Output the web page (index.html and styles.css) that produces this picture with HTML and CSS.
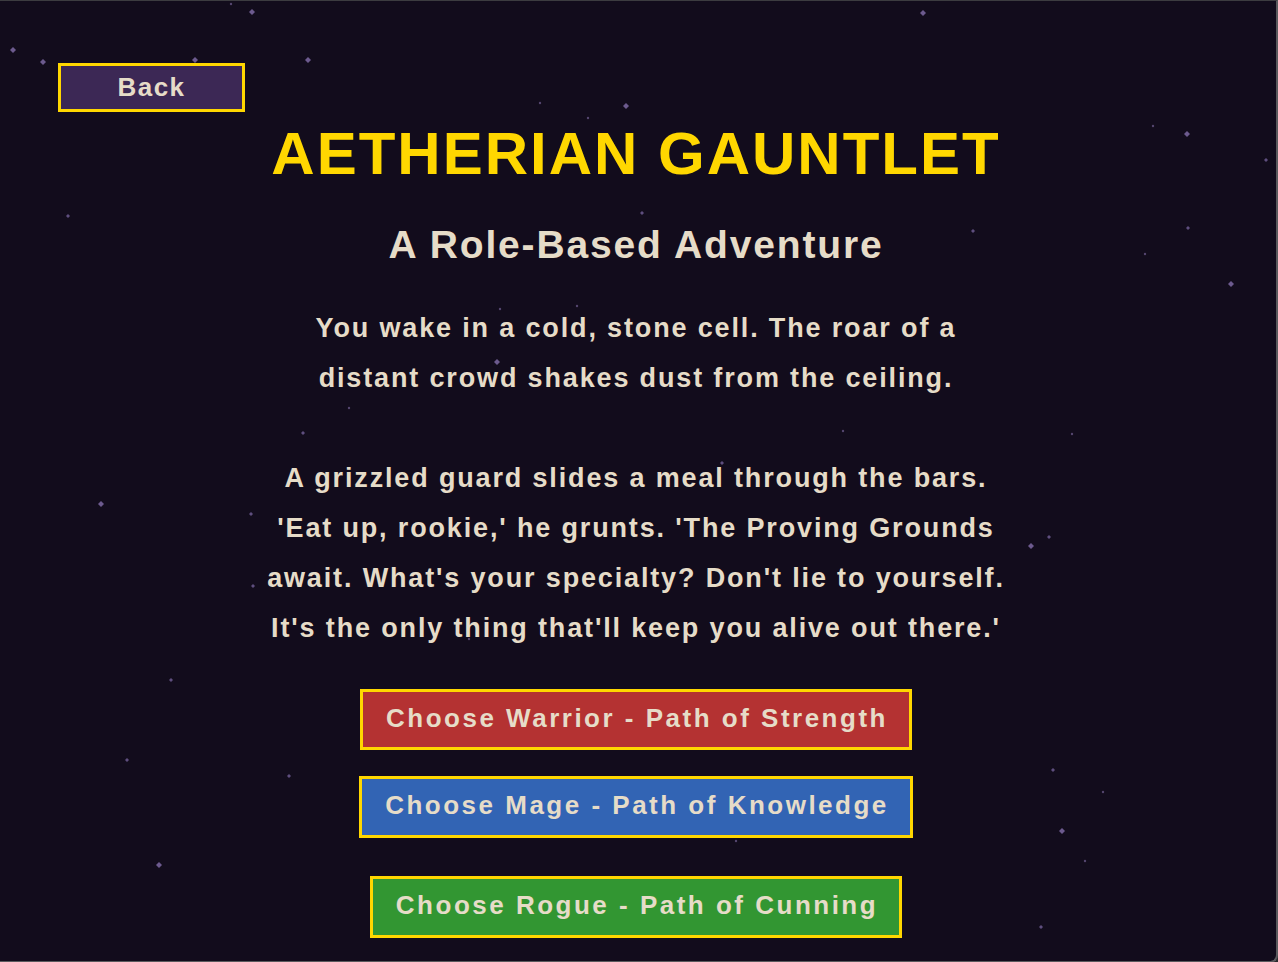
FILE: index.html
```html
<!DOCTYPE html>
<html lang="en">
<head>
<meta charset="utf-8">
<title>Aetherian Gauntlet</title>
<link rel="stylesheet" href="styles.css">
</head>
<body>
<div class="screen">
  <svg class="stars" width="1276" height="960" viewBox="0 0 1276 960" aria-hidden="true">
    <g class="star-big">
      <path d="M13 46l3 3-3 3-3-3z"/>
      <path d="M43 58l3 3-3 3-3-3z"/>
      <path d="M195 56l3 3-3 3-3-3z"/>
      <path d="M308 56l3 3-3 3-3-3z"/>
      <path d="M252 8l3 3-3 3-3-3z"/>
      <path d="M626 102l3 3-3 3-3-3z"/>
      <path d="M1187 130l3 3-3 3-3-3z"/>
      <path d="M1231 280l3 3-3 3-3-3z"/>
      <path d="M497 358l3 3-3 3-3-3z"/>
      <path d="M101 500l3 3-3 3-3-3z"/>
      <path d="M1031 542l3 3-3 3-3-3z"/>
      <path d="M1062 827l3 3-3 3-3-3z"/>
      <path d="M159 861l3 3-3 3-3-3z"/>
      <path d="M923 9l3 3-3 3-3-3z"/>
    </g>
    <g class="star-mid">
      <path d="M68 213l2 2-2 2-2-2z"/>
      <path d="M642 210l2 2-2 2-2-2z"/>
      <path d="M1266 157l2 2-2 2-2-2z"/>
      <path d="M1188 225l2 2-2 2-2-2z"/>
      <path d="M722 460l2 2-2 2-2-2z"/>
      <path d="M251 511l2 2-2 2-2-2z"/>
      <path d="M253 583l2 2-2 2-2-2z"/>
      <path d="M171 677l2 2-2 2-2-2z"/>
      <path d="M127 757l2 2-2 2-2-2z"/>
      <path d="M289 773l2 2-2 2-2-2z"/>
      <path d="M1053 767l2 2-2 2-2-2z"/>
      <path d="M1049 534l2 2-2 2-2-2z"/>
      <path d="M1041 924l2 2-2 2-2-2z"/>
      <path d="M303 430l2 2-2 2-2-2z"/>
      <path d="M973 228l2 2-2 2-2-2z"/>
    </g>
    <g class="star-small">
      <circle cx="231" cy="3" r="1.2"/>
      <circle cx="540" cy="102" r="1.2"/>
      <circle cx="588" cy="117" r="1.2"/>
      <circle cx="1153" cy="125" r="1.2"/>
      <circle cx="1145" cy="253" r="1.2"/>
      <circle cx="500" cy="308" r="1.2"/>
      <circle cx="577" cy="305" r="1.2"/>
      <circle cx="567" cy="382" r="1.2"/>
      <circle cx="349" cy="407" r="1.2"/>
      <circle cx="843" cy="430" r="1.2"/>
      <circle cx="1072" cy="433" r="1.2"/>
      <circle cx="534" cy="482" r="1.2"/>
      <circle cx="469" cy="638" r="1.2"/>
      <circle cx="736" cy="840" r="1.2"/>
      <circle cx="1103" cy="791" r="1.2"/>
      <circle cx="1085" cy="860" r="1.2"/>
    </g>
  </svg>

  <main class="content">
    <button class="back" type="button">Back</button>
    <h1 class="title">AETHERIAN GAUNTLET</h1>
    <h2 class="subtitle">A Role-Based Adventure</h2>
    <p class="story">You wake in a cold, stone cell. The roar of a<br>distant crowd shakes dust from the ceiling.<br><br>A grizzled guard slides a meal through the bars.<br>'Eat up, rookie,' he grunts. 'The Proving Grounds<br>await. What's your specialty? Don't lie to yourself.<br>It's the only thing that'll keep you alive out there.'</p>
    <div class="choices">
      <button class="choice warrior" type="button">Choose Warrior - Path of Strength</button>
      <button class="choice mage" type="button">Choose Mage - Path of Knowledge</button>
      <button class="choice rogue" type="button">Choose Rogue - Path of Cunning</button>
    </div>
  </main>
</div>
</body>
</html>
```

FILE: styles.css
```css
html, body {
  margin: 0;
  padding: 0;
  background: #2b2b2e;
}

.screen {
  position: relative;
  width: 1276px;
  height: 960px;
  background: #120c1c;
  border-top: 1px solid #3c3c40;
  border-right: 2px solid #5a5a5e;
  border-bottom: 2px solid #5a5a5e;
  border-bottom-right-radius: 8px;
  overflow: hidden;
  font-family: "Liberation Sans", Arial, "Helvetica", sans-serif;
  font-weight: bold;
  color: #e6dcc8;
}

.stars {
  position: absolute;
  left: 0;
  top: 0;
  z-index: 0;
}

.star-big path { fill: #6c5a8e; }
.star-mid path { fill: #5e4e7e; }
.star-small circle { fill: #54466f; }

.content {
  position: relative;
  z-index: 1;
  display: flex;
  flex-direction: column;
  align-items: center;
  padding: 62px 4px 0 0;
}

.back {
  align-self: flex-start;
  margin: 0 0 0 58px;
  width: 187px;
  height: 49px;
  box-sizing: border-box;
  border: 3px solid #ffd700;
  background: #3c2855;
  color: #e6dcc8;
  font-family: inherit;
  font-weight: bold;
  font-size: 26px;
  letter-spacing: 1.5px;
  padding: 0;
  line-height: 43px;
}

.title {
  margin: 12px 0 0;
  font-size: 60px;
  line-height: 60px;
  letter-spacing: 2px;
  color: #ffd700;
  font-weight: bold;
}

.subtitle {
  margin: 41px 0 0;
  font-size: 39px;
  line-height: 39px;
  letter-spacing: 1.85px;
  color: #e6dcc8;
  font-weight: bold;
}

.story {
  margin: 39px 0 0;
  font-size: 27px;
  line-height: 50px;
  letter-spacing: 1.85px;
  text-align: center;
  white-space: nowrap;
}

.choices {
  display: flex;
  flex-direction: column;
  align-items: center;
  gap: 26px;
  margin-top: 36px;
}

.choice {
  height: 62px;
  box-sizing: border-box;
  border: 3px solid #ffd700;
  padding: 0 21px 4px 23px;
  color: #e6dcc8;
  font-family: inherit;
  font-weight: bold;
  font-size: 26px;
  letter-spacing: 2.5px;
  line-height: 52px;
}

.warrior { background: #b43232; height: 61px; }
.mage { background: #3264b4; }
.rogue { background: #329632; margin-top: 12px; }
```
